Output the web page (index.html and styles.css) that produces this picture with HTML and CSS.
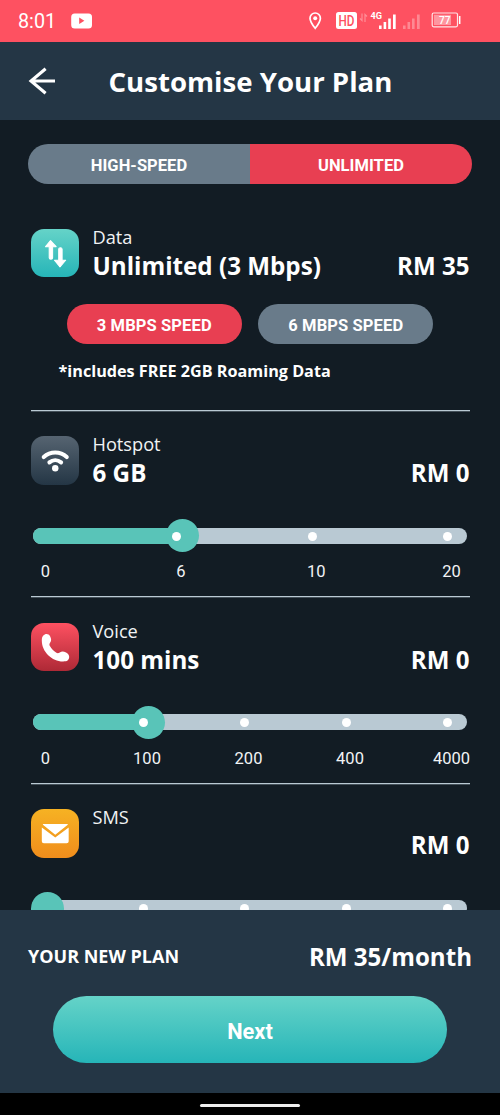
FILE: index.html
```html
<!DOCTYPE html>
<html lang="en">
<head>
<meta charset="utf-8">
<meta name="viewport" content="width=device-width, initial-scale=1">
<title>Customise Your Plan</title>
<link rel="stylesheet" href="styles.css">
</head>
<body>
<div class="screen">
  <div class="status">
    <span class="clock">8:01</span>
    <svg class="status-video" width="22" height="16" viewBox="0 0 22 16"><rect x=".2" y=".5" width="20.800" height="15" rx="3.5" fill="#fff"/><path d="M8.200 4.600v6.300l5.200-3.150z" fill="#fe5161"/></svg>
    <svg class="status-icons" width="156" height="22" viewBox="0 0 156 22">
      <g fill="none" stroke="#fff" stroke-width="1.700"><path d="M10.200 18.300C6.900 14.200 5 11.300 5 8.200a5.200 5.200 0 0 1 10.400 0c0 3.100-1.900 6-5.200 10.100z"/></g>
      <circle cx="10.200" cy="8.200" r="2" fill="#fff"/>
      <rect x="31" y="2" width="21" height="17" rx="2.500" fill="#fff"/>
      <text x="33.500" y="16.200" class="hd" textLength="16" lengthAdjust="spacingAndGlyphs">HD</text>
      <g fill="none" stroke="#fff" stroke-opacity=".35" stroke-width="1.200"><path d="M57 3.500v7l-2-2M60 12V4.500l2 2"/></g>
      <text x="65.500" y="8.800" class="net" textLength="11.500" lengthAdjust="spacingAndGlyphs">4G</text>
      <path fill="#fff" d="M74 15.500h2.600V19H74zM78.600 12h2.600v7h-2.600zM83.200 8.500h2.600V19h-2.600zM88 4.500h2.700V19H88z"/>
      <path fill="#fff" opacity=".32" d="M98 15.500h2.600V19H98zM102.500 12h2.600v7h-2.600zM107 8.500h2.600V19H107zM112 4.500h2.700V19H112z"/>
      <rect x="127.200" y="3" width="25.300" height="13.800" rx="1.500" fill="none" stroke="#fff" stroke-opacity=".85" stroke-width="1.200"/>
      <rect x="129" y="4.800" width="17" height="10.200" fill="#fff" opacity=".4"/>
      <path d="M154.700 6v8" stroke="#fff" stroke-width="1.500"/>
      <text x="134" y="14" class="batt" textLength="11.500" lengthAdjust="spacingAndGlyphs">77</text>
    </svg>
  </div>

  <header class="header">
    <svg class="back" width="28" height="28" viewBox="0 0 28 28" fill="none" stroke="#fff" stroke-width="3.100"><path d="M17.600 1.700L3 14l14.600 12.300M2.500 14H27"/></svg>
    <h1 class="title">Customise Your Plan</h1>
  </header>

  <main class="plans">
    <div class="tabs">
      <div class="tab">HIGH-SPEED</div>
      <div class="tab tab-on">UNLIMITED</div>
    </div>

    <section class="plan plan-data">
      <div class="head">
        <svg class="icon icon-data" viewBox="0 0 48 48"><path fill="#fff" stroke="#fff" stroke-width="1" stroke-linejoin="round" d="M19.300 11.500l5.600 6h-3.500v11q0 1.500-1.700 1.500t-1.700-1.500v-11h-3.600zM28.700 37.500l5.600-6.600h-3.500V20q0-1.500-1.700-1.500T27.400 20v10.900h-4.200z"/></svg>
        <div class="info"><div class="name">Data</div><div class="value">Unlimited (3 Mbps)</div></div>
        <div class="price">RM 35</div>
      </div>
      <div class="speeds">
        <div class="speed speed-on">3 MBPS SPEED</div>
        <div class="speed">6 MBPS SPEED</div>
      </div>
      <p class="note">*includes FREE 2GB Roaming Data</p>
    </section>

    <section class="plan">
      <div class="head">
        <svg class="icon icon-hotspot" viewBox="0 0 48 48"><g fill="none" stroke="#fff" stroke-width="4" stroke-linecap="round"><path d="M12.600 20.800c6.500-6 16.300-6 22.800 0M18.200 26.100c3.500-2.900 8.100-2.900 11.600 0"/></g><circle cx="24" cy="32" r="3.200" fill="#fff"/></svg>
        <div class="info"><div class="name">Hotspot</div><div class="value">6 GB</div></div>
        <div class="price">RM 0</div>
      </div>
      <div class="slider">
        <div class="fill" style="width:149px"></div>
        <div class="thumb" style="left:149px"></div>
        <div class="dots"><i class="dot dot-off"></i><i class="dot"></i><i class="dot"></i><i class="dot"></i></div>
      </div>
      <div class="scale"><span>0</span><span>6</span><span>10</span><span>20</span></div>
    </section>

    <section class="plan">
      <div class="head">
        <svg class="icon icon-voice" viewBox="0 0 48 48"><path fill="#fff" d="M12.200 12.400C14 10.100 17.600 10.400 18.900 13c1.400 2.800 1.300 4.400.1 6.300-1 1.600-1 2.300-.3 3.500 1.600 3 3.600 5 6.400 6.600 1.200.7 1.900.6 3.400-.3 2-1.200 3.700-1.200 6.200.2 3.300 1.800 4 5 2 7.300-1.100 1.200-2.600 1.400-5 1.400-11 0-21-9.600-21-20.800 0-2.100.4-3.500 1.500-4.800z"/></svg>
        <div class="info"><div class="name">Voice</div><div class="value">100 mins</div></div>
        <div class="price">RM 0</div>
      </div>
      <div class="slider">
        <div class="fill" style="width:115px"></div>
        <div class="thumb" style="left:115.500px"></div>
        <div class="dots"><i class="dot dot-off"></i><i class="dot"></i><i class="dot"></i><i class="dot"></i><i class="dot"></i></div>
      </div>
      <div class="scale"><span>0</span><span>100</span><span>200</span><span>400</span><span>4000</span></div>
    </section>

    <section class="plan plan-sms">
      <div class="head">
        <svg class="icon icon-sms" viewBox="0 0 48 48"><path fill="#fff" d="M12.300 14.800h23.400q1.200 0 .7.900L24 25.500 11.800 15.700q-.5-.9.500-.900zM10.700 18.200L24 28.300l13.300-10.100V32q0 2-2 2H12.700q-2 0-2-2z"/></svg>
        <div class="info"><div class="name">SMS</div></div>
        <div class="price">RM 0</div>
      </div>
      <div class="slider">
        <div class="thumb" style="left:14px"></div>
        <div class="dots"><i class="dot dot-off"></i><i class="dot"></i><i class="dot"></i><i class="dot"></i><i class="dot"></i></div>
      </div>
    </section>
  </main>

  <footer class="footer">
    <div class="summary"><span class="summary-label">YOUR NEW PLAN</span><span class="summary-price">RM 35/month</span></div>
    <div class="next">Next</div>
  </footer>
  <div class="navbar"><div class="handle"></div></div>
</div>
</body>
</html>
```

FILE: styles.css
```css
* { box-sizing: border-box; }
body { margin: 0; background: #121c24; font-family: "Open Sans", "Noto Sans", sans-serif; color: #fff; }
.screen { width: 500px; height: 1115px; display: flex; flex-direction: column; overflow: hidden; white-space: nowrap; }

.status { height: 41.5px; flex: none; background: #fe5161; display: flex; align-items: center; padding-left: 18px; }
.clock { font: 400 19.8px/22px Roboto, sans-serif; width: 53px; padding-top: 3px; }
.status-icons { margin-left: 212px; }
.hd { font: 500 14px Roboto, sans-serif; fill: #fe5161; }
.net { font: 700 9.5px Roboto, sans-serif; fill: #fff; }
.batt { font: 500 11px Roboto, sans-serif; fill: #fff; }

.header { height: 78px; flex: none; background: #243645; display: flex; align-items: center; padding-left: 27.5px; }
.title { margin: 0 0 0 53px; font-size: 27.6px; line-height: 36px; font-weight: 700; padding-top: 1px; }

.plans { flex: 1; min-height: 0; overflow: hidden; padding: 24.5px 28px 0; }
.tabs { display: flex; height: 40px; border-radius: 20px; overflow: hidden; }
.tab { flex: 1; background: #697b8a; text-align: center; font: 700 16.5px/43px Roboto, sans-serif; letter-spacing: .05px; }
.tab-on { background: #e83f52; }

.plan { margin: 0 2.5px; height: 186.5px; padding-top: 25.5px; border-bottom: 1px solid #b9c9d3; box-shadow: 0 1px rgba(185, 201, 211, .3); }
.plan-data { height: 226.5px; padding-top: 44.5px; }
.head { display: flex; height: 56px; }
.icon { width: 48.5px; height: 48.5px; border-radius: 13px; flex: none; }
.icon-data { background: linear-gradient(#65d3c8, #26b5b8); }
.icon-hotspot { background: linear-gradient(#566471, #243645); }
.icon-voice { background: linear-gradient(#fe5161, #ae2936); }
.icon-sms { background: linear-gradient(#f6b223, #f08d1c); }
.info { margin-left: 13.5px; flex: 1; }
.name { font-size: 18.2px; line-height: 24px; margin-top: -4px; color: #f1f3f4; }
.value { font-size: 24.2px; line-height: 34px; font-weight: 700; }
.price { margin-top: 20px; font-size: 24.1px; line-height: 34px; font-weight: 700; }
.plan-sms .price { margin-top: 19px; }

.speeds { display: flex; gap: 16.5px; margin: 19px 0 0 36px; }
.speed { width: 175px; height: 40px; border-radius: 20px; background: #697b8a; text-align: center; font: 700 16.5px/43px Roboto, sans-serif; letter-spacing: .12px; padding-left: .5px; }
.speed-on { background: #e83f52; }
.note { margin: 15px 0 0 28px; font-size: 16.2px; line-height: 24px; font-weight: 700; }

.slider { position: relative; height: 16px; margin: 35.5px 2.5px 0; border-radius: 8px; background: #b9c9d3; }
.fill { height: 16px; border-radius: 8px; background: #59c4b8; }
.thumb { position: absolute; top: -8.5px; width: 33px; height: 33px; margin-left: -16.5px; border-radius: 50%; background: #59c4b8; }
.dots { position: absolute; inset: 4px 15px 0 4px; display: flex; justify-content: space-between; }
.dot { width: 9px; height: 9px; border-radius: 50%; background: #fff; }
.dot-off { visibility: hidden; }
.scale { display: flex; justify-content: space-between; margin: 18.5px 18px 0 15px; font: 400 16.5px/20px Roboto, sans-serif; color: #f1f3f4; }
.scale span { width: 0; display: flex; justify-content: center; }
.plan-sms .slider { margin-top: 35px; }

.footer { height: 182.5px; flex: none; background: #243645; padding: 28px 28px 0; }
.summary { display: flex; justify-content: space-between; align-items: center; height: 36px; }
.summary-label { font-size: 18px; font-weight: 700; }
.summary-price { font-size: 24.1px; font-weight: 700; }
.next { margin: 22px 25px 0; height: 67px; border-radius: 33.5px; background: linear-gradient(#65d3c8, #26b5b8); text-align: center; font: 700 21.8px/71px Roboto, sans-serif; }
.navbar { flex: none; height: 22.5px; background: #000; padding-top: 11px; }
.handle { width: 100px; height: 3px; border-radius: 1.5px; margin: 0 auto; background: #eee; }
```
